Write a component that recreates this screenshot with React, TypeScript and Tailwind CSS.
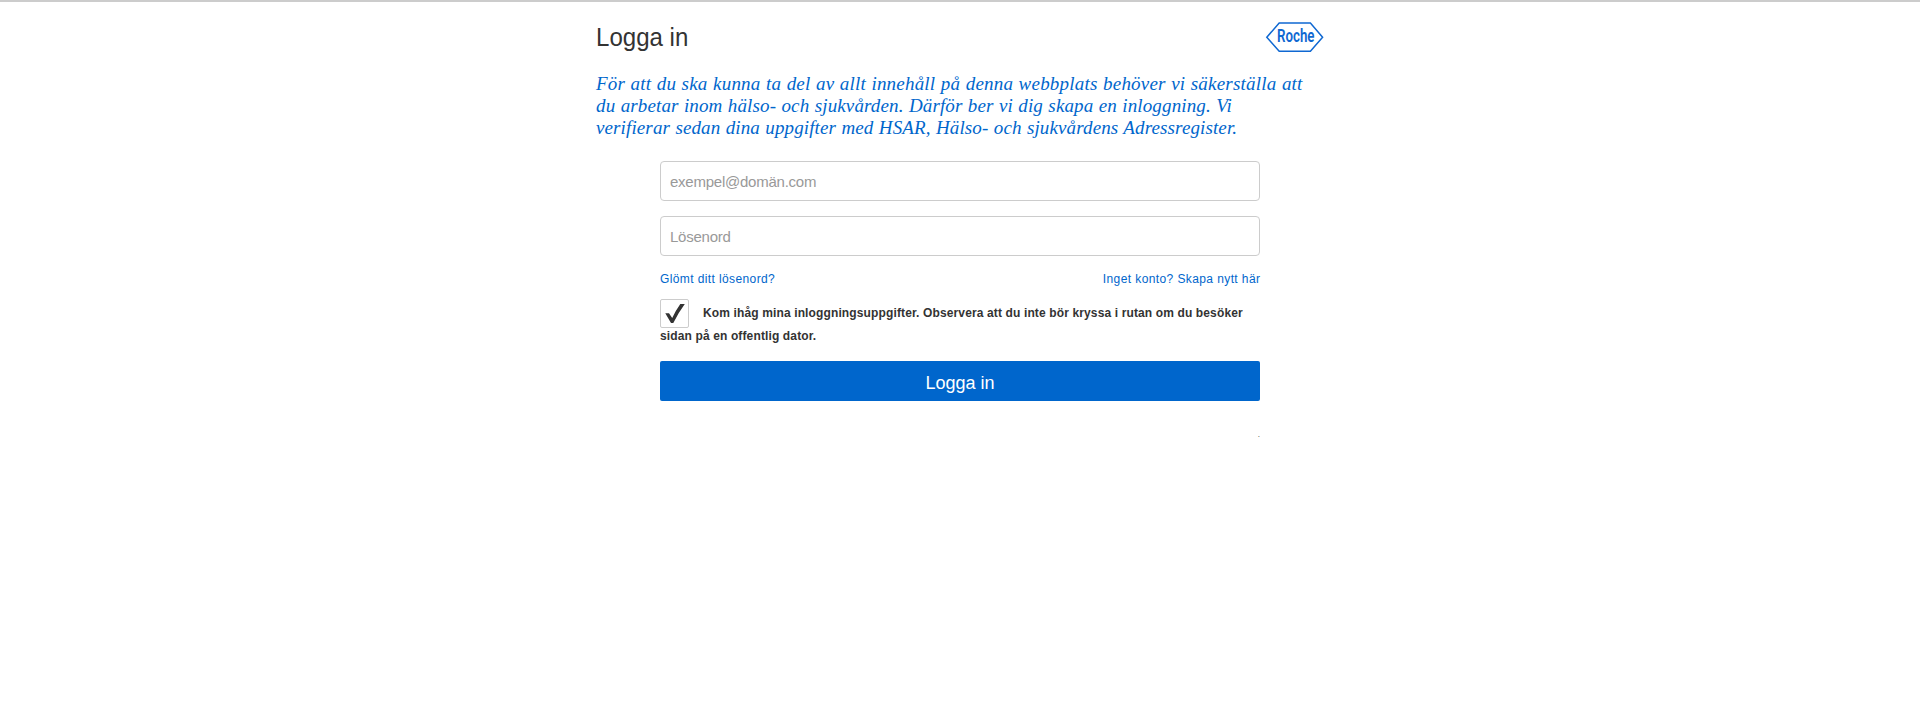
import React from "react";

const introLines = [
  { text: "För att du ska kunna ta del av allt innehåll på denna webbplats behöver vi säkerställa att", fit: "tracking-[0.21px] [word-spacing:0.5px]" },
  { text: "du arbetar inom hälso- och sjukvården. Därför ber vi dig skapa en inloggning. Vi", fit: "tracking-[0.13px] [word-spacing:0.5px]" },
  { text: "verifierar sedan dina uppgifter med HSAR, Hälso- och sjukvårdens Adressregister.", fit: "tracking-[0.12px] [word-spacing:0.5px]" },
];

function RocheLogo() {
  return (
    <svg className="block h-8 w-[60px] overflow-visible" viewBox="0 0 60 32" role="img" aria-label="Roche">
      <path d="M15.2 2H46.4L58.6 16.2L46.4 30.3H15.2L2.8 16.2Z" fill="none" stroke="#0f68d2" strokeWidth="1.5" />
      <g transform="translate(13 21.4) scale(0.76 1)">
        <text fill="#0f68d2" fontFamily="Roboto, sans-serif" fontSize="17.5" fontWeight="600">
          Roche
        </text>
      </g>
    </svg>
  );
}

const inputClass =
  "block h-10 w-full rounded-[4px] border border-[#ccc] bg-white px-[9px] font-['Liberation_Sans',sans-serif] text-[15px] tracking-[-0.24px] text-[#333] outline-none placeholder:text-[#999]";

export default function App() {
  return (
    <main className="h-[704px] overflow-hidden border-t-2 border-[#ccc] bg-white font-['Liberation_Sans',sans-serif] text-[#333]">
      <div className="mx-auto w-[728px]">
        <header className="flex h-[70px] items-start justify-between pt-[19px]">
          <h1 className="-mt-[2px] origin-left scale-x-[0.925] text-[26px] leading-9">Logga in</h1>
          <RocheLogo />
        </header>
        <div className="pt-px font-['Liberation_Serif',serif] text-[19px] leading-[22px] whitespace-nowrap text-[#0066cc] italic">
          {introLines.map((line) => (
            <p key={line.text} className={line.fit}>{line.text}</p>
          ))}
        </div>
        <form className="mx-auto mt-[22px] w-[600px]">
          <input className={inputClass} placeholder="exempel@domän.com" />
          <input className={`${inputClass} mt-[15px]`} type="password" placeholder="Lösenord" />
          <div className="mt-[13px] flex h-5 justify-between text-[12px] leading-5 text-[#0066cc]">
            <a className="tracking-[0.39px]">Glömt ditt lösenord?</a>
            <a className="-mr-[0.4px] tracking-[0.4px]">Inget konto? Skapa nytt här</a>
          </div>
          <label className="mt-[10px] block text-[12px] font-bold tracking-[0.13px] whitespace-nowrap">
            <span className="flex h-[29px]">
              <span className="h-[29px] w-[29px] rounded-[2px] border border-[#ccc]">
                <svg className="block h-[27px] w-[27px]" viewBox="0 0 27 27">
                  <path d="M4.3 13.2H8L11.2 18Q15 10 19.3 4H23.8Q17.5 12.5 12.3 23H10Z" fill="#333" />
                </svg>
              </span>
              <span className="ml-[14px] leading-[28px]">Kom ihåg mina inloggningsuppgifter. Observera att du inte bör kryssa i rutan om du besöker</span>
            </span>
            <span className="block h-[18px] leading-[16px]">sidan på en offentlig dator.</span>
          </label>
          <button type="button" className="mt-[15px] block h-10 w-full rounded-[2px] bg-[#0066cc] pt-[4px] text-center text-[18px] leading-[36px] text-white">
            Logga in
          </button>
          <p className="mt-[24px] text-right text-[8px] leading-[20px]">.</p>
        </form>
      </div>
    </main>
  );
}
